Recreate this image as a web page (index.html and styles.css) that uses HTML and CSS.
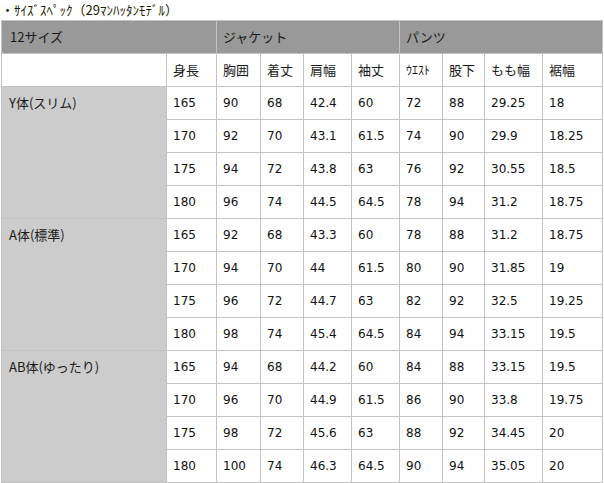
FILE: index.html
```html
<!DOCTYPE html>
<html lang="ja">
<head>
<meta charset="utf-8">
<title>サイズスペック</title>
<link rel="stylesheet" href="styles.css">
</head>
<body>
<p class="title">・ｻｲｽﾞｽﾍﾟｯｸ（29ﾏﾝﾊｯﾀﾝﾓﾃﾞﾙ）</p>
<div class="spec">
  <div class="head span2 first">12サイズ</div>
  <div class="head span4">ジャケット</div>
  <div class="head span4">パンツ</div>

  <div class="cell blank"></div>
  <div class="cell">身長</div>
  <div class="cell">胸囲</div>
  <div class="cell">着丈</div>
  <div class="cell">肩幅</div>
  <div class="cell">袖丈</div>
  <div class="cell small">ｳｴｽﾄ</div>
  <div class="cell">股下</div>
  <div class="cell">もも幅</div>
  <div class="cell">裾幅</div>

  <div class="type">Y体(スリム)</div>
  <div class="cell num">165</div><div class="cell num">90</div><div class="cell num">68</div><div class="cell num">42.4</div><div class="cell num">60</div><div class="cell num">72</div><div class="cell num">88</div><div class="cell num">29.25</div><div class="cell num">18</div>
  <div class="cell num">170</div><div class="cell num">92</div><div class="cell num">70</div><div class="cell num">43.1</div><div class="cell num">61.5</div><div class="cell num">74</div><div class="cell num">90</div><div class="cell num">29.9</div><div class="cell num">18.25</div>
  <div class="cell num">175</div><div class="cell num">94</div><div class="cell num">72</div><div class="cell num">43.8</div><div class="cell num">63</div><div class="cell num">76</div><div class="cell num">92</div><div class="cell num">30.55</div><div class="cell num">18.5</div>
  <div class="cell num">180</div><div class="cell num">96</div><div class="cell num">74</div><div class="cell num">44.5</div><div class="cell num">64.5</div><div class="cell num">78</div><div class="cell num">94</div><div class="cell num">31.2</div><div class="cell num">18.75</div>

  <div class="type">A体(標準)</div>
  <div class="cell num">165</div><div class="cell num">92</div><div class="cell num">68</div><div class="cell num">43.3</div><div class="cell num">60</div><div class="cell num">78</div><div class="cell num">88</div><div class="cell num">31.2</div><div class="cell num">18.75</div>
  <div class="cell num">170</div><div class="cell num">94</div><div class="cell num">70</div><div class="cell num">44</div><div class="cell num">61.5</div><div class="cell num">80</div><div class="cell num">90</div><div class="cell num">31.85</div><div class="cell num">19</div>
  <div class="cell num">175</div><div class="cell num">96</div><div class="cell num">72</div><div class="cell num">44.7</div><div class="cell num">63</div><div class="cell num">82</div><div class="cell num">92</div><div class="cell num">32.5</div><div class="cell num">19.25</div>
  <div class="cell num">180</div><div class="cell num">98</div><div class="cell num">74</div><div class="cell num">45.4</div><div class="cell num">64.5</div><div class="cell num">84</div><div class="cell num">94</div><div class="cell num">33.15</div><div class="cell num">19.5</div>

  <div class="type">AB体(ゆったり)</div>
  <div class="cell num">165</div><div class="cell num">94</div><div class="cell num">68</div><div class="cell num">44.2</div><div class="cell num">60</div><div class="cell num">84</div><div class="cell num">88</div><div class="cell num">33.15</div><div class="cell num">19.5</div>
  <div class="cell num">170</div><div class="cell num">96</div><div class="cell num">70</div><div class="cell num">44.9</div><div class="cell num">61.5</div><div class="cell num">86</div><div class="cell num">90</div><div class="cell num">33.8</div><div class="cell num">19.75</div>
  <div class="cell num">175</div><div class="cell num">98</div><div class="cell num">72</div><div class="cell num">45.6</div><div class="cell num">63</div><div class="cell num">88</div><div class="cell num">92</div><div class="cell num">34.45</div><div class="cell num">20</div>
  <div class="cell num">180</div><div class="cell num">100</div><div class="cell num">74</div><div class="cell num">46.3</div><div class="cell num">64.5</div><div class="cell num">90</div><div class="cell num">94</div><div class="cell num">35.05</div><div class="cell num">20</div>
</div>
</body>
</html>
```
FILE: styles.css
```css
html, body {
  margin: 0;
  padding: 0;
  background: #ffffff;
}
body {
  padding: 0 1px;
  font-family: "Noto Sans CJK JP", "Noto Sans", sans-serif;
  color: #1a1a1a;
}
.title {
  margin: 0;
  height: 20px;
  line-height: 20px;
  font-size: 13px;
  color: #1a1a00;
  white-space: nowrap;
}
.spec {
  display: grid;
  grid-template-columns: 164px 49px 43px 42px 47px 47px 42px 41px 57px 59px;
  grid-auto-rows: 32px;
  gap: 1px;
  padding: 1px;
  width: max-content;
  background: #c3c3c3;
  font-size: 13px;
}
.head {
  background: #999999;
  line-height: 32px;
  padding-left: 6px;
  color: #1a1a1a;
  white-space: nowrap;
}
.head.first {
  padding-left: 8px;
}
.span2 {
  grid-column: span 2;
}
.span4 {
  grid-column: span 4;
}
.cell {
  background: #ffffff;
  line-height: 32px;
  padding-left: 6px;
  white-space: nowrap;
}
.cell.small {
  font-size: 12px;
}
.cell.num {
  font-family: "DejaVu Sans", "Noto Sans CJK JP", sans-serif;
  font-size: 12px;
  color: #111111;
}
.type {
  grid-row: span 4;
  background: #cccccc;
  line-height: 32px;
  padding-left: 7px;
  white-space: nowrap;
}
```
